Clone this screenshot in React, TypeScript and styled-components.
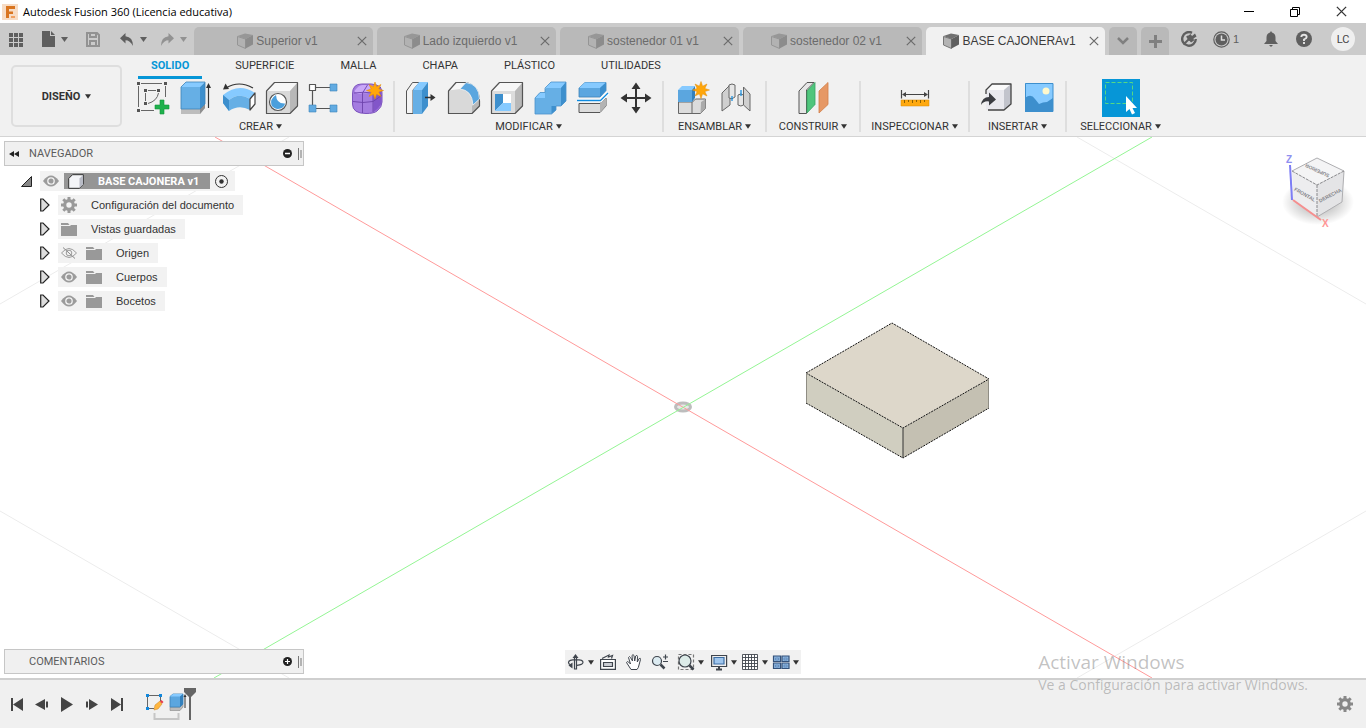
import React from 'react';
import styled, { createGlobalStyle, css } from 'styled-components';

const sans = '"Liberation Sans", Arial, sans-serif';
const compact = 'Roboto, "Liberation Sans", sans-serif';
const segoe = '"Open Sans", "Noto Sans", sans-serif';

const GlobalStyle = createGlobalStyle`
  * { box-sizing: border-box; }
  body { margin: 0; font-family: ${sans}; font-size: 11px; color: #333; }
  button { font: inherit; color: inherit; border: 0; padding: 0; background: none; cursor: pointer; }
  svg { display: block; flex: none; }
`;

const Page = styled.div`
  position: relative;
  display: flex;
  flex-direction: column;
  min-height: 100vh;
  overflow: hidden;
`;

/* ---------- title bar ---------- */

const TitleBar = styled.header`
  display: flex;
  align-items: center;
  height: 23px;
  padding: 0 2px;
  background: #fff;
`;

const AppTitle = styled.h1`
  flex: 1;
  margin: 0 0 0 5px;
  font: 400 11px ${segoe};
  color: #000;
  line-height: 22px;
`;

const WindowButton = styled.button`
  display: flex;
  align-items: center;
  justify-content: center;
  width: 46px;
  height: 21px;
`;

/* ---------- document tabs ---------- */

const DocumentBar = styled.div`
  display: flex;
  height: 32px;
  background: #cbcbcb;
  color: #5f5f5f;
`;

const QuickTools = styled.div`
  display: flex;
  align-items: center;
  width: 194px;
  padding-left: 8px;
`;

const QuickButton = styled.button<{ $gap: number }>`
  display: flex;
  align-items: center;
  gap: 6px;
  margin-right: ${(p) => p.$gap}px;
  &:disabled { color: #929292; }
`;

const Tabs = styled.div`
  display: flex;
  align-items: flex-end;
  gap: 4px;
`;

const DocTab = styled.div<{ $active?: boolean }>`
  display: flex;
  align-items: center;
  width: 179px;
  height: 28px;
  padding: 0 6px 0 4px;
  border-radius: 5px 5px 0 0;
  background: ${(p) => (p.$active ? '#f1f1f1' : '#b9b9b9')};
  color: ${(p) => (p.$active ? '#3c3c3c' : '#6b6b6b')};
`;

const DocName = styled.button`
  display: flex;
  flex: 1;
  align-items: center;
  justify-content: center;
  gap: 2px;
  font-size: 12px;
  line-height: 16px;
  white-space: nowrap;
`;

const CloseTab = styled.button`
  color: #6b6b6b;
`;

const SmallTab = styled.button`
  display: flex;
  align-items: center;
  justify-content: center;
  width: 28px;
  height: 28px;
  border-radius: 5px 5px 0 0;
  background: #b9b9b9;
  color: #808080;
`;

const AccountTools = styled.div`
  display: flex;
  flex: 1;
  align-items: center;
  justify-content: flex-end;
  padding-right: 11px;
`;

const AccountButton = styled.button<{ $gap: number }>`
  display: flex;
  align-items: center;
  gap: 3px;
  margin-right: ${(p) => p.$gap}px;
`;

const Avatar = styled.button`
  width: 24px;
  height: 24px;
  border-radius: 50%;
  background: #efefef;
  font-family: ${compact};
  color: #444;
`;

/* ---------- ribbon ---------- */

const Ribbon = styled.div`
  display: flex;
  height: 82px;
  border-bottom: 1px solid #d4d4d4;
  background: #f1f1f1;
  font-family: ${compact};
  font-size: 11px;
`;

const Workspace = styled.button`
  display: flex;
  align-items: center;
  justify-content: center;
  gap: 5px;
  width: 111px;
  margin: 10px 6px 9px 11px;
  border: 2px solid #dedede;
  border-radius: 5px;
  font-weight: 700;
`;

const RibbonBody = styled.div`
  flex: 1;
`;

const RibbonTabs = styled.nav`
  display: flex;
  gap: 20px;
  height: 24px;
  padding-left: 10px;
`;

const RibbonTab = styled.button<{ $active?: boolean }>`
  padding: 0 13px;
  border-bottom: 3px solid transparent;
  ${(p) =>
    p.$active &&
    css`
      border-bottom-color: #0696d7;
      color: #0696d7;
      font-weight: 700;
    `}
`;

const Groups = styled.div`
  display: flex;
  height: 57px;
`;

const Group = styled.section<{ $width: number }>`
  display: flex;
  flex-direction: column;
  align-items: center;
  width: ${(p) => p.$width}px;
`;

const Divider = styled.div`
  width: 2px;
  margin: 2px 0 4px;
  background: #dedede;
`;

const GroupTools = styled.div`
  display: flex;
  align-items: center;
  gap: 9px;
  height: 38px;
`;

const GroupLabel = styled.button`
  display: flex;
  align-items: center;
  gap: 3px;
  height: 19px;
  white-space: nowrap;
`;

const SelectTool = styled.span`
  display: block;
  width: 38px;
  height: 38px;
  background: #0696d7;
`;

/* ---------- canvas ---------- */

const Canvas = styled.main`
  position: relative;
  display: flex;
  flex: 1;
  flex-direction: column;
  justify-content: space-between;
  padding: 4px;
  background: #fff;
`;

const Scene = styled.svg`
  position: absolute;
  inset: 0;
  width: 100%;
  height: 100%;
`;

const CubeHolder = styled.div`
  position: absolute;
  top: 11px;
  right: 8px;
`;

const Layer = styled.div`
  position: relative;
  align-self: flex-start;
`;

const PanelBar = styled.div`
  display: flex;
  align-items: center;
  width: 300px;
  height: 25px;
  border: 1px solid #c6c6c6;
  padding: 0 1px 0 4px;
  background: #f0f0f0;
  color: #5b5b5b;
  font-family: ${compact};
  font-size: 11px;
`;

const PanelTitle = styled.h2`
  flex: 1;
  margin: 0 0 0 10px;
  font: inherit;
`;

const PanelLead = styled.span`
  width: 10px;
`;

const PanelButton = styled.button`
  margin-right: 6px;
`;

const Tree = styled.ul`
  margin: 3px 0 0;
  padding: 0;
  list-style: none;
`;

const TreeRow = styled.li<{ $level: number }>`
  display: flex;
  align-items: center;
  height: 24px;
  padding-left: ${(p) => (p.$level ? 36 : 17)}px;
`;

const Expander = styled.button<{ $width: number }>`
  width: ${(p) => p.$width}px;
`;

const Band = styled.div`
  display: flex;
  align-items: center;
  height: 20px;
  gap: 9px;
  padding: 0 9px 0 3px;
  background: #f2f2f2;
`;

const NodeName = styled.span`
  margin-left: 5px;
`;

const RootBand = styled(Band)`
  gap: 5px;
  padding: 0 7px 0 3px;
`;

const RootName = styled.span`
  display: flex;
  align-items: center;
  gap: 14px;
  height: 16px;
  padding: 0 11px 0 4px;
  background: #959595;
  color: #fff;
  font: 700 11px Roboto, sans-serif;
`;

const BottomRow = styled.div`
  position: relative;
  display: grid;
  grid-template-columns: 1fr auto 1fr;
  align-items: end;
`;

const NavBar = styled.div`
  display: flex;
  align-items: center;
  height: 24px;
  padding: 0 2px;
  background: #f1f1f1;
`;

const NavButton = styled.button<{ $gap: number }>`
  display: flex;
  align-items: center;
  gap: 3px;
  margin-right: ${(p) => p.$gap}px;
`;

/* ---------- timeline ---------- */

const Timeline = styled.footer`
  display: flex;
  align-items: center;
  justify-content: space-between;
  height: 50px;
  padding: 0 13px 0 9px;
  border-top: 2px solid #cfcfcf;
  background: #f0f0f0;
`;

const Playback = styled.div`
  display: flex;
  align-items: center;
  gap: 9px;
`;

const History = styled.div`
  margin-left: 11px;
`;

const Watermark = styled.aside`
  position: absolute;
  right: 58px;
  bottom: 33px;
  color: rgba(120, 120, 120, 0.45);
  font-family: ${segoe};
  pointer-events: none;
`;

const WatermarkTitle = styled.p`
  margin: 0;
  font-size: 19px;
  line-height: 25px;
`;

const WatermarkText = styled.p`
  margin: 0;
  font-size: 14px;
  line-height: 20px;
`;

/* ---------- shared drawings ---------- */

const Caret = ({ size = 7 }: { size?: number }) => (
  <svg width={size} height="5" viewBox="0 0 7 5" fill="currentColor">
    <path d="M0 0h7L3.5 5z" />
  </svg>
);

const Tool = ({ children }: { children: React.ReactNode }) => (
  <svg width="34" height="34" viewBox="0 0 34 34" fill="none" strokeLinejoin="round">
    {children}
  </svg>
);

const Star = ({ x, y }: { x: number; y: number }) => (
  <path
    transform={`translate(${x} ${y})`}
    d="M0-8.5 1.6-3.8 6-6 3.8-1.6 8.500 0 3.8 1.6 6 6 1.6 3.8 0 8.500-1.6 3.8-6 6-3.8 1.6-8.500 0-3.8-1.6-6-6-1.6-3.8z"
    fill="#ffa60a"
    stroke="#e28b00"
    strokeWidth=".5"
  />
);

const icons: Record<string, React.ReactNode> = {
  Boceto: (
    <Tool>
      <path d="M5 2.500h21M2.500 5v21M29.500 5v11M5 29.500h13M12 9.500h8M9.500 12v8M22.500 12Q21 20 12 22.500" stroke="#666" />
      <path d="M1 1h3v3H1zM28 1h3v3h-3zM1 28h3v3H1zM8 8h3v3H8zM21 8h3v3h-3zM8 21h3v3H8z" fill="#555" />
      <path d="M24 19h4v5h5v4h-5v5h-4v-5h-5v-4h5z" fill="#1fb14c" stroke="#12943a" strokeWidth=".6" />
    </Tool>
  ),
  Extrusión: (
    <Tool>
      <path d="M2 28h19l5-5v4l-5 6H2z" fill="#bdbdbd" />
      <path d="M21 28l5-5v4l-5 6z" fill="#8f8f8f" />
      <path d="M2 6h19v22H2z" fill="#66afe5" />
      <path d="M2 6l5-5h19l-5 5z" fill="#86caff" />
      <path d="M21 6l5-5v22l-5 5z" fill="#3d8fcd" />
      <path d="M2 6l5-5h19v22l-5 5H2z" stroke="#3d83b8" strokeWidth=".8" />
      <path d="M29.500 4v23" stroke="#333" strokeWidth="1.200" />
      <path d="M27 7l2.500-5L32 7z" fill="#333" />
    </Tool>
  ),
  Revolución: (
    <Tool>
      <path d="M1 14Q17 1 33 12l-5 6Q17 11 7 19z" fill="#86caff" />
      <path d="M1 14v8l6 8Q17 23 28 29V18Q17 11 7 19z" fill="#66afe5" />
      <path d="M1 14v8l6 8V19z" fill="#3d8fcd" />
      <path d="M28 18l5-6v11l-5 6z" fill="#fff" stroke="#444" strokeWidth="1.200" />
      <path d="M4 7Q17-1 31 7" stroke="#333" strokeWidth="1.200" />
      <path d="M1 8.500l2.500-6L7 8z" fill="#333" />
    </Tool>
  ),
  Agujero: (
    <Tool>
      <path d="M1.500 10l8-8.500H32.500l-7.500 8.500z" fill="#f7f7f7" />
      <path d="M25 10l7.500-8.500V25L25 32.500z" fill="#b8b8b8" />
      <path d="M1.500 10H25v22.500H1.500z" fill="#d9d9d9" />
      <path d="M1.500 10l8-8.500H32.500V25L25 32.500H1.500z" stroke="#555" strokeWidth="1.200" />
      <circle cx="13" cy="21" r="8.500" fill="#fff" stroke="#555" strokeWidth="1.200" />
      <path d="M11 14Q4.500 18 6.500 24.500 10 29 15.500 27.500q4-1.500 4.500-5Q11.500 23 11 14z" fill="#4b9fdc" />
    </Tool>
  ),
  Patrón: (
    <Tool>
      <path d="M8 6.500h14M4.500 10v14M8 27.500h14" stroke="#555" strokeWidth="1.200" />
      <path d="M1.500 3.500h6v6h-6z" fill="#fff" stroke="#555" strokeWidth="1.200" />
      <path d="M22 3h7v7h-7zM22 24h7v7h-7zM1 24h7v7H1z" fill="#62abe2" stroke="#3d83b8" strokeWidth=".6" />
    </Tool>
  ),
  'Crear forma': (
    <Tool>
      <path d="M1.500 13q0-10 9-10h10q11 1 10.500 9v9q0 5-5 9-3 2.500-11 2.500-13.500 0-13.500-9.500z" fill="#a47ce0" stroke="#7c53bd" />
      <path d="M3.500 10q4-6 8-6h8q5 2 3 6-4 3-10 2-7 2-9-2z" fill="#c9a8f8" />
      <path d="M22.500 13q5-4 8-3v12q-2 5-8 9z" fill="#8256c9" />
      <path d="M2 20.500q10 2 20 0l8.500-6M11.500 12v20M22 13v18M3 12q10-1.500 19 0l8-6M11.500 12l5-8" stroke="#6c42ab" strokeWidth=".9" />
      <Star x={24} y={9.5} />
    </Tool>
  ),
  'Pulsar/Tirar': (
    <Tool>
      <path d="M2.500 10l6-8.500h7L9 9v23.500H2.500z" fill="#f4f4f4" stroke="#555" />
      <path d="M9 9l6-8h9l-6 8z" fill="#86caff" />
      <path d="M9 9h9v24H9z" fill="#66afe5" />
      <path d="M18 9l6-8v24l-6 8z" fill="#3d8fcd" />
      <path d="M21 16.500h7" stroke="#333" strokeWidth="1.500" />
      <path d="M26.500 13l5 3.500-5 3.500z" fill="#333" />
    </Tool>
  ),
  Empalme: (
    <Tool>
      <path d="M1.500 10L9 1.500h10Q32 5 32.500 20v5L25 32.500H1.500z" fill="#d9d9d9" />
      <path d="M25 25l7.500-7V25L25 32.500z" fill="#b8b8b8" />
      <path d="M1.500 9.500L9 1.500h10L13 8z" fill="#f7f7f7" />
      <path d="M1.500 10L9 1.500h10Q32 5 32.500 20v5L25 32.500H1.500z" stroke="#555" strokeWidth="1.200" />
      <path d="M13 8l6-6.500Q32 3 32.500 18L26 24Q25 9 13 8z" fill="#5ba6df" stroke="#f1f1f1" strokeWidth=".8" />
    </Tool>
  ),
  Vaciado: (
    <Tool>
      <path d="M1.500 10l8-8.500H32.500l-7.500 8.500z" fill="#f7f7f7" />
      <path d="M25 10l7.500-8.500V25L25 32.500z" fill="#b8b8b8" />
      <path d="M1.500 10H25v22.500H1.500z" fill="#dcdcdc" />
      <path d="M1.500 10l8-8.500H32.500V25L25 32.500H1.500z" stroke="#555" strokeWidth="1.200" />
      <path d="M5 13h16v17H5z" fill="#fff" />
      <path d="M5 13h8v9l-8 8z" fill="#3d8fcd" />
      <path d="M13 22h8v8H5z" fill="#86caff" />
    </Tool>
  ),
  Combinar: (
    <Tool>
      <path d="M2 17l5-5.500h5V8l6-7h15v19l-5 5h-5v4l-4.500 4H2z" fill="#66afe5" />
      <path d="M12 7l6-6h15l-5 6zM2 17l5-5h5v5z" fill="#86caff" />
      <path d="M28 7l5-6v19l-5 5zM18.500 25h4.500v4l-4.500 4z" fill="#3d8fcd" />
      <path d="M2 17l5-5.500h5V7l6-6h15v19l-5 5h-5v4l-4.500 4H2z" stroke="#4b93cb" strokeWidth=".8" />
    </Tool>
  ),
  'Dividir cuerpo': (
    <Tool>
      <path d="M3 7l6-5.500h21V9.500L24 16H3z" fill="#5ba6df" stroke="#3d83b8" strokeWidth=".8" />
      <path d="M3 7l6-5.500h21L24 7z" fill="#86caff" />
      <path d="M24 7l6-5.500V9.500L24 16z" fill="#3d8fcd" />
      <path d="M3 22.500h21l6-5.500v8l-6 6.500H3z" fill="#dcdcdc" stroke="#555" />
      <path d="M24 22.500l6-5.500v8l-6 6.500z" fill="#b3b3b3" />
      <path d="M1 19.500h23.500L32 12" stroke="#fff" strokeWidth="3.500" />
      <path d="M1 19.500h23.500L32 12" stroke="#0e8be0" strokeWidth="1.300" />
    </Tool>
  ),
  Mover: (
    <Tool>
      <path d="M17 5v24M5 17h24" stroke="#333" strokeWidth="2" />
      <path d="M12.500 8L17 1.500 21.500 8zM12.500 26l4.500 6.500 4.500-6.500zM8 12.500L1.500 17 8 21.500zM26 12.500l6.500 4.500-6.500 4.500z" fill="#333" />
    </Tool>
  ),
  'Nuevo componente': (
    <Tool>
      <path d="M2 21h14.500v11.500H2zM16.500 21l3-3H29l-4 3v11.500h-9" fill="#dcdcdc" />
      <path d="M2.500 20.500v12h22l5-5V18h-10l-3 3H2.500M16 21v11" stroke="#666" />
      <path d="M25 21l4.500-3v9.500l-5 5z" fill="#aaa" />
      <path d="M2 9h14v12H2z" fill="#5ba6df" />
      <path d="M2 9l4-4h13l-3 4z" fill="#86caff" />
      <path d="M16 9l3-4v12l-3 4z" fill="#3380bd" />
      <Star x={25} y={9} />
    </Tool>
  ),
  Unión: (
    <Tool>
      <path d="M3 12l8-8v20l-8 6z" fill="#cfcfcf" stroke="#666" />
      <path d="M10 4q3-2 6 0v12q-3 3-6 1z" fill="#e6e6e6" stroke="#666" />
      <path d="M24.500 6l6.500 7v17l-6.500-6z" fill="#cfcfcf" stroke="#666" />
      <path d="M19 14q3-2 5.500 0v10q-2.500 2-5.500 0z" fill="#e6e6e6" stroke="#666" />
      <path d="M13 15v5M22 9v6" stroke="#0e8be0" strokeWidth="1.200" />
    </Tool>
  ),
  'Plano de desfase': (
    <Tool>
      <path d="M3 10l8-8.500h7L10.500 9v23.500H3z" fill="#e6e6e6" stroke="#555" />
      <path d="M11 10l8-8.500v22L11 32z" fill="#4fc57c" stroke="#38a463" strokeWidth=".8" />
      <path d="M23 10l9-8.500v22L23 32z" fill="#e69865" stroke="#d27f49" strokeWidth=".8" />
    </Tool>
  ),
  Medir: (
    <Tool>
      <path d="M3.500 9v8.500M30.500 9v8.500M5 13.500h24" stroke="#444" strokeWidth="1.200" />
      <path d="M4 13.500l4-2.500v5zM30 13.500L26 11v5z" fill="#444" />
      <path d="M3 19h28v6H3z" fill="#ffa90f" stroke="#d98b00" strokeWidth=".5" />
      <path d="M6.500 19v3M10.500 19v2M14.500 19v3M18.500 19v2M22.500 19v3M26.500 19v2" stroke="#8d6000" />
    </Tool>
  ),
  'Insertar derivación': (
    <Tool>
      <path d="M7 9l6-6h19v20l-7 6H7z" fill="#e9e9ee" />
      <path d="M7 9l6-6h19l-7 6z" fill="#fafafa" />
      <path d="M25 9l7-6v20l-7 6z" fill="#c2c4cc" />
      <path d="M7 13V9l6-6h19v20l-7 6H9" stroke="#444" strokeWidth="1.300" />
      <path d="M2 24q1-8 8-8v-4.500l7 7-7 6v-4q-5-1-8 3.500z" fill="#3b3d42" />
    </Tool>
  ),
  'Insertar imagen': (
    <Tool>
      <path d="M3 2h28v29H3z" fill="#86caff" />
      <path d="M3 17q6-5 10 1l4 5q4-2 8-2l6-4v14H3z" fill="#3d8fcd" />
      <circle cx="24" cy="10" r="3.500" fill="#fff8cc" />
      <path d="M3.500 2.500h27.500v28H3.500z" stroke="#3d8fcd" />
    </Tool>
  ),
  Seleccionar: (
    <SelectTool>
      <svg width="38" height="38" viewBox="0 0 38 38" fill="none">
        <path d="M3.500 3.500h27v21h-27z" stroke="#55d884" strokeDasharray="4 2" />
        <path d="M24 17v16l3.500-3 2.500 5.500 3-1.500-2.500-5H35z" fill="#fff" />
      </svg>
    </SelectTool>
  ),
};

const Cube = ({ active }: { active: boolean }) => (
  <svg width="17" height="17" viewBox="0 0 17 17">
    <path d="M.5 3.500L8.500 6v9.500L.5 12z" fill={active ? '#b4b4b4' : '#b2b2b2'} stroke={active ? '#777' : '#959595'} />
    <path d="M.5 3L8 .5 16 2 8.500 6z" fill={active ? '#707070' : '#979797'} />
    <path d="M8.500 6L16 2v9.500l-7.500 4z" fill={active ? '#5f5f5f' : '#8c8c8c'} />
  </svg>
);

const CloseMark = ({ size }: { size: number }) => (
  <svg width={size} height={size} viewBox="0 0 10 10" stroke="currentColor" strokeWidth="1.200">
    <path d="M.8.800l8.400 8.400M9.200.8L.8 9.200" />
  </svg>
);

const Gear = ({ color }: { color: string }) => (
  <svg width="16" height="16" viewBox="0 0 16 16" fill="none" stroke={color}>
    <circle cx="8" cy="8" r="4.300" strokeWidth="3.200" />
    <path d="M8 0v3.500M8 12.500V16M0 8h3.500M12.500 8H16M2.300 2.300l2.500 2.500M11.200 11.200l2.500 2.500M13.700 2.300l-2.500 2.500M4.800 11.200l-2.500 2.500" strokeWidth="3" />
  </svg>
);

const Eye = ({ off }: { off?: boolean }) => (
  <svg width="16" height="12" viewBox="0 0 16 12" fill="none">
    {off ? (
      <>
        <path d="M.5 6Q8-3 15.500 6 8 15 .5 6z" stroke="#9b9b9b" />
        <circle cx="8" cy="6" r="2.800" stroke="#9b9b9b" />
        <path d="M2 .5l12 11" stroke="#8b8b8b" />
      </>
    ) : (
      <>
        <path d="M0 6Q8-5 16 6 8 17 0 6z" fill="#9b9b9b" />
        <circle cx="8" cy="6" r="3.200" fill="#9b9b9b" stroke="#f2f2f2" strokeWidth="1.300" />
      </>
    )}
  </svg>
);

const Folder = () => (
  <svg width="16" height="13" viewBox="0 0 16 13" fill="#999">
    <path d="M0 0h7l1.500 2H0zM0 3h9l1-1h6v11H0z" />
  </svg>
);

const Body = () => (
  <svg width="16" height="15" viewBox="0 0 16 15" strokeLinejoin="round">
    <path d="M.7 4.500L4.500.7h10.800v9.500L11.500 14.300H.7z" fill="#f4f5f8" stroke="#333" />
    <path d="M11.500 4.500L15 .9v9.300l-3.500 3.800z" fill="#b9bcc6" />
  </svg>
);

const ViewCube = () => (
  <svg width="80" height="84" viewBox="0 0 80 84" fill="none" fontFamily="Liberation Sans, sans-serif">
    <defs>
      <radialGradient id="shade">
        <stop offset="0" stopColor="#000" stopOpacity=".4" />
        <stop offset=".5" stopColor="#000" stopOpacity=".18" />
        <stop offset="1" stopColor="#000" stopOpacity="0" />
      </radialGradient>
    </defs>
    <ellipse cx="40" cy="54" rx="36" ry="23" fill="url(#shade)" />
    <path d="M14 23l25-13 27 13-27 14z" fill="#f4f4f5" />
    <path d="M14 23l25 14v32L15 52z" fill="#ededef" />
    <path d="M66 23L39 37v32l25-15z" fill="#e4e4e6" />
    <path d="M14 23l25-13 27 13-2 31-25 15" stroke="#aeaeb1" />
    <path d="M66 23L39 37 14 23M39 37v32" stroke="#88888b" strokeDasharray="3 1" />
    <path d="M12 17l2 35" stroke="#7d7df5" strokeWidth="2" />
    <path d="M15 52l28 20" stroke="#f58f8f" strokeWidth="2" />
    <text x="8" y="15" fontSize="10" fontWeight="700" fill="#9090f0">Z</text>
    <text x="44" y="79" fontSize="10" fontWeight="700" fill="#ff9595">X</text>
    <g fontSize="5" fontWeight="700" fill="#85858a" textAnchor="middle">
      <text transform="translate(26 48) rotate(30)">FRONTAL</text>
      <text transform="translate(53 49) rotate(-28)">DERECHA</text>
      <text transform="translate(40 21) rotate(205)">SUPERIOR</text>
    </g>
  </svg>
);

const Model = () => (
  <Scene viewBox="0 0 1366 541" preserveAspectRatio="xMidYMid slice" fill="none">
    <path d="M0 167L289 0M1077 0l289 167M0 374l289 167M1077 541l289-167" stroke="#ececec" />
    <ellipse cx="683" cy="270" rx="7.500" ry="4" fill="#e8e8e8" stroke="#bdbdbd" strokeWidth="3" />
    <path d="M215 0l937 541" stroke="#ff9a9a" />
    <path d="M1152 0L214 541" stroke="#94f594" />
    <path d="M806 236l86-50 97 56-86 49z" fill="#ddd7ca" />
    <path d="M806 236l97 55v30l-97-55z" fill="#d0cec0" />
    <path d="M989 242l-86 49v30l86-50z" fill="#c4c0b2" />
    <path d="M806 236l86-50 97 56-86 49zM806 266l97 55 86-50" stroke="#111" strokeDasharray="2 1" />
    <path d="M903 291v30" stroke="#333" />
    <path d="M806.500 236v30M988.500 242v29" stroke="#8f8d84" />
  </Scene>
);

/* ---------- data ---------- */

const documents = ['Superior v1', 'Lado izquierdo v1', 'sostenedor 01 v1', 'sostenedor 02 v1', 'BASE CAJONERAv1'];
const ribbonTabs = ['SOLIDO', 'SUPERFICIE', 'MALLA', 'CHAPA', 'PLÁSTICO', 'UTILIDADES'];

const groups = [
  { label: 'CREAR', width: 265, tools: ['Boceto', 'Extrusión', 'Revolución', 'Agujero', 'Patrón', 'Crear forma'] },
  { label: 'MODIFICAR', width: 267, tools: ['Pulsar/Tirar', 'Empalme', 'Vaciado', 'Combinar', 'Dividir cuerpo', 'Mover'] },
  { label: 'ENSAMBLAR', width: 101, tools: ['Nuevo componente', 'Unión'] },
  { label: 'CONSTRUIR', width: 92, tools: ['Plano de desfase'] },
  { label: 'INSPECCIONAR', width: 107, tools: ['Medir'] },
  { label: 'INSERTAR', width: 95, tools: ['Insertar derivación', 'Insertar imagen'] },
  { label: 'SELECCIONAR', width: 107, tools: ['Seleccionar'] },
];

const nodes: { name: string; icon: React.ReactNode; eye?: 'on' | 'off' }[] = [
  { name: 'Configuración del documento', icon: <Gear color="#999" /> },
  { name: 'Vistas guardadas', icon: <Folder /> },
  { name: 'Origen', icon: <Folder />, eye: 'off' },
  { name: 'Cuerpos', icon: <Folder />, eye: 'on' },
  { name: 'Bocetos', icon: <Folder />, eye: 'on' },
];

const NavIcon = ({ children }: { children: React.ReactNode }) => (
  <svg width="18" height="18" viewBox="0 0 18 18" fill="none" stroke="#3f454d" strokeWidth="1.200">
    {children}
  </svg>
);

const navTools: { name: string; menu?: boolean; gap: number; icon: React.ReactNode }[] = [
  {
    name: 'Orbitar',
    menu: true,
    gap: 5,
    icon: (
      <NavIcon>
        <path d="M7.500 4v12h2V4M5 12.500H3M10 12.300q6-.5 6-3T9 6.700Q1.500 6.700 1.500 9.500q0 1.500 2 2.300" />
        <path d="M5.500 5l3-4 3 4zM5.500 9.500v6l-4-3z" fill="#3f454d" stroke="none" />
      </NavIcon>
    ),
  },
  {
    name: 'Mirar a',
    gap: 8,
    icon: (
      <NavIcon>
        <path d="M1.600 6.500h14.800v9.900H1.600z" fill="#fff" />
        <path d="M4.500 9.500h9v4h-9z" fill="#c9ccd2" />
        <path d="M3 5.500l7-3.500-.5 2 4-1.500-1 3" />
      </NavIcon>
    ),
  },
  {
    name: 'Encuadre',
    gap: 8,
    icon: (
      <NavIcon>
        <path
          d="M6 16.500L1.500 9.500q.5-1.500 2-.5L5.500 11 3.500 4.500q.8-1.800 2 0L7.500 8 7 2.500q1-1.800 2 0L9.700 8l1-5q1.300-1.500 1.800.3L12.300 9l1.900-3.500q1.500-.8 1.300 1L14 12q-.5 3-2 4.500z"
          fill="#fff"
          strokeWidth="1"
        />
      </NavIcon>
    ),
  },
  {
    name: 'Zoom',
    gap: 8,
    icon: (
      <NavIcon>
        <circle cx="6" cy="8" r="4.500" fill="#dcebf1" />
        <path d="M9.500 11.500l4 4" strokeWidth="2.500" />
        <path d="M12 4h5M14.500 1.500v5M12 8.500h5" />
      </NavIcon>
    ),
  },
  {
    name: 'Ajustar',
    menu: true,
    gap: 6,
    icon: (
      <NavIcon>
        <path d="M1.500 1.500h15v15h-15z" stroke="#777" strokeDasharray="3 2" />
        <circle cx="8" cy="8" r="6" fill="#dcebe8" />
        <path d="M12.500 12.500l4 4" strokeWidth="2.500" />
      </NavIcon>
    ),
  },
  {
    name: 'Configuración de visualización',
    menu: true,
    gap: 4,
    icon: (
      <NavIcon>
        <path d="M1.600 2.500h15v11h-15z" fill="#eee" />
        <path d="M4 4.500h10v6.500H4z" fill="#9fc6ee" stroke="#3e6fa5" />
        <path d="M6 16.500h6M9 14v2" strokeWidth="2" />
      </NavIcon>
    ),
  },
  {
    name: 'Rejilla y forzados',
    menu: true,
    gap: 4,
    icon: (
      <NavIcon>
        <path d="M1.500 1.500h15v15h-15zM4.500 1.500v15M7.500 1.500v15M10.500 1.500v15M13.500 1.500v15M1.500 4.500h15M1.500 7.500h15M1.500 10.500h15M1.500 13.500h15" strokeWidth=".9" fill="#fff" />
      </NavIcon>
    ),
  },
  {
    name: 'Ventanas gráficas',
    menu: true,
    gap: 0,
    icon: (
      <NavIcon>
        <path d="M1.500 3h7v5.500h-7zM10 3h7v5.500h-7zM1.500 10h7v5.500h-7zM10 10h7v5.500h-7z" fill="#8db5de" stroke="#33517a" />
        <path d="M3.500 5h3v2h-3zM12 5h3v2h-3zM3.500 12h3v2h-3zM12 12h3v2h-3z" stroke="#5c86b8" strokeWidth=".8" />
      </NavIcon>
    ),
  },
];

const playback = [
  { name: 'Ir al inicio', d: 'M2 2h2v13H2zM14 2v13L4 8.500z' },
  { name: 'Paso atrás', d: 'M11 3v11L1 8.500zM12 5.500h2v6h-2z' },
  { name: 'Reproducir', d: 'M2 1l12 7.500L2 16z' },
  { name: 'Paso adelante', d: 'M5 3v11l9-5.500zM2 5.500h2v6H2z' },
  { name: 'Ir al final', d: 'M2 2v13l10-6.500zM12 2h2v13h-2z' },
];

const FeatureHistory = () => (
  <svg width="52" height="34" viewBox="0 -1 52 34" fill="none">
    <path d="M4 7.500h10M2.500 9v10M15.500 9v4M4 20.500h5" stroke="#666" />
    <path d="M1 6h3v3H1zM14 6h3v3h-3zM1 19h3v3H1z" fill="#1188dd" />
    <path d="M10 17l5-4 2 3-4 5-4 1z" fill="#ffb63f" stroke="#c9852b" strokeWidth=".5" />
    <path d="M15 13.500l1.500-1.500 2 2-1.500 1.500z" fill="#e83a4c" />
    <path d="M25 19h10l3-3v3l-3 3.500H25z" fill="#bbb" stroke="#888" strokeWidth=".6" />
    <path d="M25 8.500L28 6h10v10l-3 3H25z" fill="#5ba6df" stroke="#3d83b8" strokeWidth=".8" />
    <path d="M25 8.500L28 6h10l-3 2.500z" fill="#86caff" />
    <path d="M35 8.500L38 6v10l-3 3z" fill="#3480bb" />
    <path d="M40 8v12" stroke="#333" />
    <path d="M38.500 9L40 6l1.500 3z" fill="#333" />
    <path d="M9.500 25v6h24v-6" stroke="#c6c6c6" strokeWidth="2" />
    <path d="M39 0h12v4l-5 5v23h-2V9l-5-5z" fill="#656565" />
  </svg>
);

export default function App() {
  return (
    <Page>
      <GlobalStyle />
      <TitleBar>
        <svg width="16" height="16" viewBox="0 0 16 16">
          <path d="M0 0h16v16H0z" fill="#f7dcc5" />
          <path d="M4 2h9v3H7v2.500h4v2.500H7V14H4z" fill="#d9741f" />
          <path d="M9 12h4v2H9z" fill="#f0a061" />
        </svg>
        <AppTitle>Autodesk Fusion 360 (Licencia educativa)</AppTitle>
        <WindowButton aria-label="Minimizar">
          <svg width="10" height="10" viewBox="0 0 10 10" stroke="#000"><path d="M0 4.500h10" /></svg>
        </WindowButton>
        <WindowButton aria-label="Restaurar">
          <svg width="10" height="10" viewBox="0 0 10 10" stroke="#000" fill="none">
            <path d="M.5 2.500h7v7h-7zM2.500 2.500v-2h7v7h-2" />
          </svg>
        </WindowButton>
        <WindowButton aria-label="Cerrar"><CloseMark size={11} /></WindowButton>
      </TitleBar>

      <DocumentBar>
        <QuickTools>
          <QuickButton $gap={18} aria-label="Panel de datos">
            <svg width="15" height="15" viewBox="0 0 15 15" fill="currentColor">
              <path d="M1 1h4v4H1zM6 1h4v4H6zM11 1h4v4h-4zM1 6h4v4H1zM6 6h4v4H6zM11 6h4v4h-4zM1 11h4v4H1zM6 11h4v4H6zM11 11h4v4h-4z" />
            </svg>
          </QuickButton>
          <QuickButton $gap={18} aria-label="Archivo">
            <svg width="14" height="16" viewBox="0 0 14 16" fill="currentColor"><path d="M1 0h8v5h5v11H1zM10 0l4 4h-4z" /></svg>
            <Caret />
          </QuickButton>
          <QuickButton $gap={20} aria-label="Guardar" disabled>
            <svg width="14" height="15" viewBox="0 0 14 15" fill="none" stroke="currentColor" strokeWidth="2">
              <path d="M1 1h10l2 2v11H1zM4 1v4h6V1M4 14V9h6v5" />
            </svg>
          </QuickButton>
          <QuickButton $gap={13} aria-label="Deshacer">
            <svg width="14" height="13" viewBox="0 0 14 13"><path d="M5.500 0v3.200Q13 4 13 13 10 7.200 5.500 7.200v3.300L0 5.200z" fill="currentColor" /></svg>
            <Caret />
          </QuickButton>
          <QuickButton $gap={0} aria-label="Rehacer" disabled>
            <svg width="14" height="13" viewBox="0 0 14 13"><path d="M8.500 0v3.200Q1 4 1 13 4 7.200 8.500 7.200v3.300L14 5.200z" fill="currentColor" /></svg>
            <Caret />
          </QuickButton>
        </QuickTools>
        <Tabs>
          {documents.map((name, i) => (
            <DocTab key={name} $active={i === documents.length - 1}>
              <DocName><Cube active={i === documents.length - 1} />{name}</DocName>
              <CloseTab aria-label={`Cerrar ${name}`}><CloseMark size={10} /></CloseTab>
            </DocTab>
          ))}
          <SmallTab aria-label="Lista de documentos">
            <svg width="12" height="8" viewBox="0 0 12 8" fill="none" stroke="currentColor" strokeWidth="2.500"><path d="M1 1l5 5 5-5" /></svg>
          </SmallTab>
          <SmallTab aria-label="Nuevo diseño">
            <svg width="13" height="13" viewBox="0 0 13 13" stroke="currentColor" strokeWidth="3"><path d="M6.500 0v13M0 6.500h13" /></svg>
          </SmallTab>
        </Tabs>
        <AccountTools>
          <AccountButton $gap={16} aria-label="Extensiones">
            <svg width="16" height="16" viewBox="0 0 16 16" fill="none">
              <path d="M11 1.800A6.800 6.800 0 1 0 14.800 8" stroke="currentColor" strokeWidth="2.400" />
              <path d="M2.500 13.500l5-5M6 5l2 3.500 3 1.500" stroke="currentColor" strokeWidth="2" />
              <path d="M6 5.500L9.500 3 11 5l3-2.500 1.500 3-3 2 .5 2-3 2z" fill="currentColor" />
            </svg>
          </AccountButton>
          <AccountButton $gap={25} aria-label="Estado de trabajos">
            <svg width="17" height="17" viewBox="0 0 17 17" fill="none">
              <circle cx="8.500" cy="8.500" r="7.700" stroke="currentColor" strokeWidth="1.200" />
              <circle cx="8.500" cy="8.500" r="6" fill="currentColor" />
              <path d="M8.500 4.500v4.500h3.500" stroke="#ddd" strokeWidth="1.500" />
            </svg>
            1
          </AccountButton>
          <AccountButton $gap={18} aria-label="Notificaciones">
            <svg width="14" height="16" viewBox="0 0 14 16" fill="currentColor">
              <path d="M7 0l1 1.500q3.500 1 3.500 5V10l2.500 3H0l2.500-3V6.500q0-4 3.500-5zM5 14h4l-2 2z" />
            </svg>
          </AccountButton>
          <AccountButton $gap={19} aria-label="Ayuda">
            <svg width="16" height="16" viewBox="0 0 16 16" fill="none">
              <circle cx="8" cy="8" r="8" fill="currentColor" />
              <path d="M5.300 6Q5.500 3.800 8 3.800T10.700 6Q10.700 7.200 8 8.500V10M8 11v2" stroke="#e4e4e4" strokeWidth="1.900" />
            </svg>
          </AccountButton>
          <Avatar>LC</Avatar>
        </AccountTools>
      </DocumentBar>

      <Ribbon>
        <Workspace>DISEÑO <Caret size={6} /></Workspace>
        <RibbonBody>
          <RibbonTabs>
            {ribbonTabs.map((name, i) => (
              <RibbonTab key={name} $active={i === 0}>{name}</RibbonTab>
            ))}
          </RibbonTabs>
          <Groups>
            {groups.map((g, i) => (
              <React.Fragment key={g.label}>
                {i > 0 && <Divider />}
                <Group $width={g.width}>
                  <GroupTools>
                    {g.tools.map((t) => (
                      <button key={t} aria-label={t}>{icons[t]}</button>
                    ))}
                  </GroupTools>
                  <GroupLabel>{g.label} <Caret size={6} /></GroupLabel>
                </Group>
              </React.Fragment>
            ))}
          </Groups>
        </RibbonBody>
      </Ribbon>

      <Canvas>
        <Model />
        <CubeHolder><ViewCube /></CubeHolder>
        <Layer>
          <PanelBar>
            <PanelLead>
              <svg width="10" height="6" viewBox="0 0 10 6" fill="#222"><path d="M5 0v6L0 3zM10 0v6L5 3z" /></svg>
            </PanelLead>
            <PanelTitle>NAVEGADOR</PanelTitle>
            <PanelButton aria-label="Contraer navegador">
              <svg width="9" height="9" viewBox="0 0 9 9"><circle cx="4.500" cy="4.500" r="4.500" fill="#222" /><path d="M2 4.500h5" stroke="#fff" strokeWidth="1.500" /></svg>
            </PanelButton>
            <svg width="4" height="12" viewBox="0 0 4 12" stroke="#777"><path d="M.5 0v12M3 2v8" /></svg>
          </PanelBar>
          <Tree>
            <TreeRow $level={0}>
              <Expander $width={19} aria-label="Contraer">
                <svg width="11" height="11" viewBox="0 0 11 11"><path d="M10.500.5v10H.5z" fill="#888" stroke="#222" /></svg>
              </Expander>
              <RootBand>
                <Eye />
                <RootName><Body />BASE CAJONERA v1</RootName>
                <svg width="13" height="13" viewBox="0 0 13 13" fill="none">
                  <circle cx="6.500" cy="6.500" r="6" stroke="#333" />
                  <circle cx="6.500" cy="6.500" r="2.200" fill="#333" />
                </svg>
              </RootBand>
            </TreeRow>
            {nodes.map((n) => (
              <TreeRow key={n.name} $level={1}>
                <Expander $width={18} aria-label={`Expandir ${n.name}`}>
                  <svg width="10" height="14" viewBox="0 0 10 14"><path d="M.7 1H3l6 6-6 6H.7z" fill="#ddd" stroke="#222" strokeWidth="1.200" /></svg>
                </Expander>
                <Band>
                  {n.eye && <Eye off={n.eye === 'off'} />}
                  {n.icon}
                  <NodeName>{n.name}</NodeName>
                </Band>
              </TreeRow>
            ))}
          </Tree>
        </Layer>
        <BottomRow>
          <PanelBar>
            <PanelLead />
            <PanelTitle>COMENTARIOS</PanelTitle>
            <PanelButton aria-label="Expandir comentarios">
              <svg width="9" height="9" viewBox="0 0 9 9"><circle cx="4.500" cy="4.500" r="4.500" fill="#222" /><path d="M2 4.500h5M4.500 2v5" stroke="#fff" strokeWidth="1.200" /></svg>
            </PanelButton>
            <svg width="4" height="12" viewBox="0 0 4 12" stroke="#777"><path d="M.5 0v12M3 2v8" /></svg>
          </PanelBar>
          <NavBar>
            {navTools.map((t) => (
              <NavButton key={t.name} $gap={t.gap} aria-label={t.name}>
                {t.icon}
                {t.menu && <Caret size={6} />}
              </NavButton>
            ))}
          </NavBar>
        </BottomRow>
      </Canvas>

      <Timeline>
        <Playback>
          {playback.map((p) => (
            <button key={p.name} aria-label={p.name}>
              <svg width="16" height="17" viewBox="0 0 16 17" fill="#444"><path d={p.d} /></svg>
            </button>
          ))}
          <History><FeatureHistory /></History>
        </Playback>
        <button aria-label="Preferencias"><Gear color="#888" /></button>
      </Timeline>

      <Watermark>
        <WatermarkTitle>Activar Windows</WatermarkTitle>
        <WatermarkText>Ve a Configuración para activar Windows.</WatermarkText>
      </Watermark>
    </Page>
  );
}
